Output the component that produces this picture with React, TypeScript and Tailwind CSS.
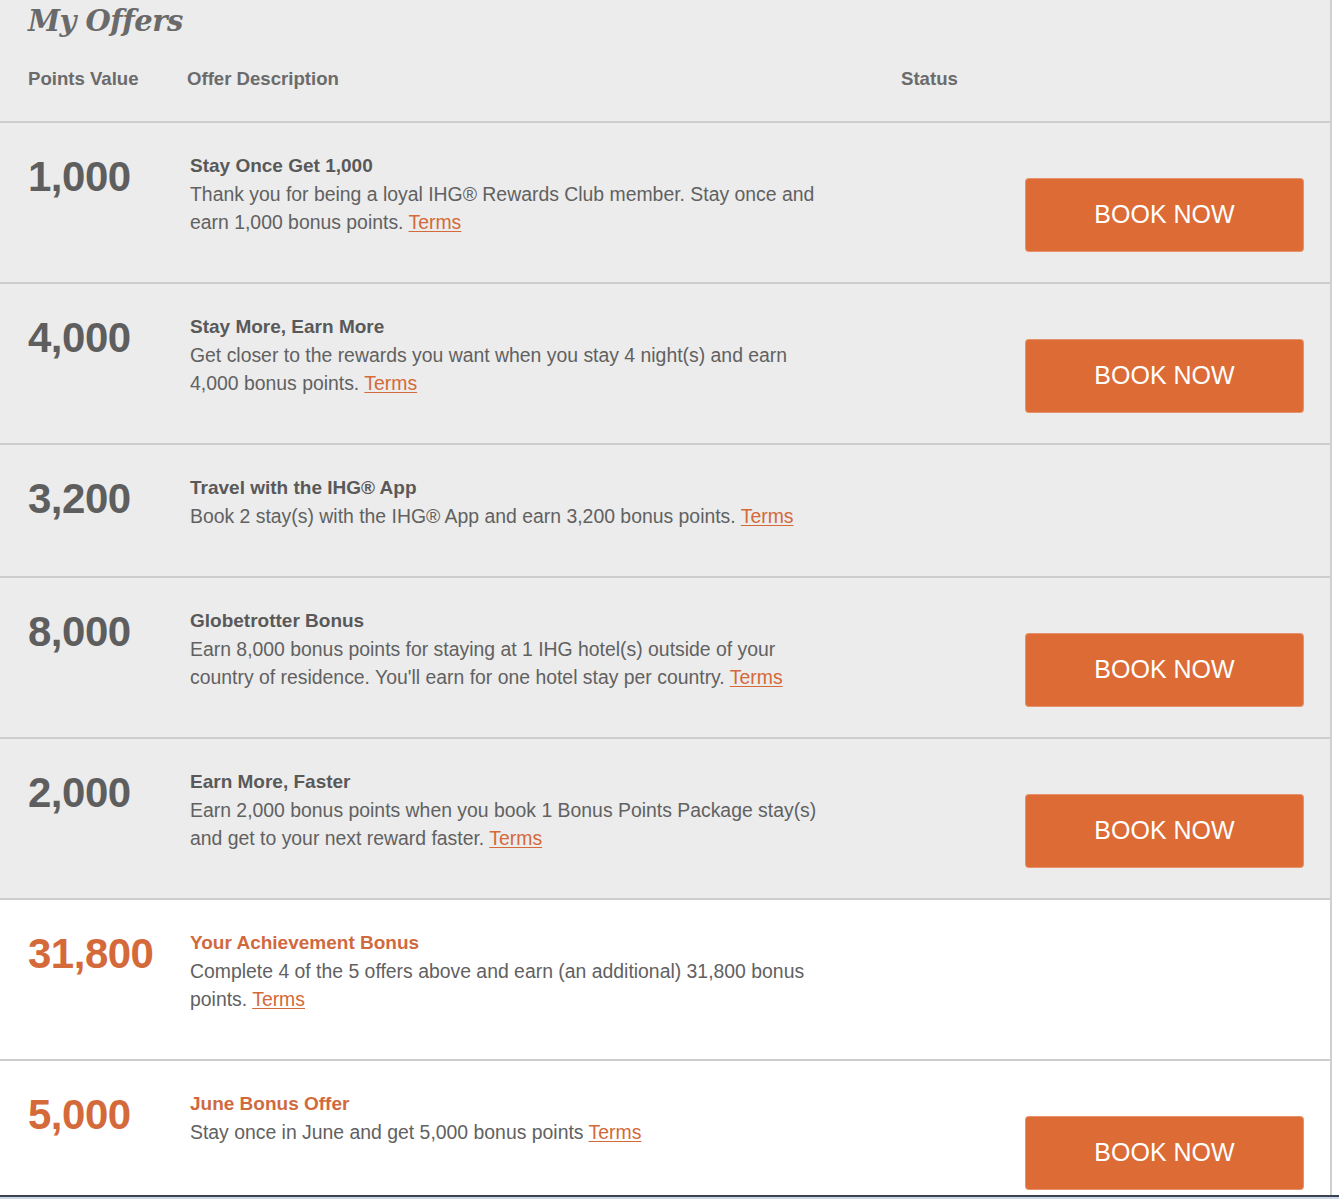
type Offer = {
  points: string
  title: string
  lines: string[]
  bookable: boolean
  highlight?: boolean
}

const offers: Offer[] = [
  {
    points: '1,000',
    title: 'Stay Once Get 1,000',
    lines: [
      'Thank you for being a loyal IHG® Rewards Club member. Stay once and',
      'earn 1,000 bonus points.',
    ],
    bookable: true,
  },
  {
    points: '4,000',
    title: 'Stay More, Earn More',
    lines: [
      'Get closer to the rewards you want when you stay 4 night(s) and earn',
      '4,000 bonus points.',
    ],
    bookable: true,
  },
  {
    points: '3,200',
    title: 'Travel with the IHG® App',
    lines: ['Book 2 stay(s) with the IHG® App and earn 3,200 bonus points.'],
    bookable: false,
  },
  {
    points: '8,000',
    title: 'Globetrotter Bonus',
    lines: [
      'Earn 8,000 bonus points for staying at 1 IHG hotel(s) outside of your',
      "country of residence. You'll earn for one hotel stay per country.",
    ],
    bookable: true,
  },
  {
    points: '2,000',
    title: 'Earn More, Faster',
    lines: [
      'Earn 2,000 bonus points when you book 1 Bonus Points Package stay(s)',
      'and get to your next reward faster.',
    ],
    bookable: true,
  },
  {
    points: '31,800',
    title: 'Your Achievement Bonus',
    lines: [
      'Complete 4 of the 5 offers above and earn (an additional) 31,800 bonus',
      'points.',
    ],
    bookable: false,
    highlight: true,
  },
  {
    points: '5,000',
    title: 'June Bonus Offer',
    lines: ['Stay once in June and get 5,000 bonus points'],
    bookable: true,
    highlight: true,
  },
]

const OfferRow = ({ offer, isLast }: { offer: Offer; isLast: boolean }) => {
  const last = offer.lines.length - 1
  return (
    <div
      className={`flex items-start pt-[29px] pl-[28px] pr-[27px] ${
        isLast ? 'pb-[6px]' : 'border-b-2 border-[#cdcdcd] pb-[46px]'
      } ${offer.highlight ? 'bg-white' : 'bg-[#ececec]'}`}
    >
      <div
        className={`w-[162px] shrink-0 text-[42px] leading-[50px] font-bold tracking-[-0.5px] ${
          offer.highlight ? 'text-[#d4693a]' : 'text-[#5e5e5e]'
        }`}
      >
        {offer.points}
      </div>
      <div className="flex-1 text-[19.4px] leading-[28px] text-[#616161]">
        <div
          className={`font-bold text-[19px] ${
            offer.highlight ? 'text-[#d06a3e]' : 'text-[#595959]'
          }`}
        >
          {offer.title}
        </div>
        {offer.lines.map((line, i) => (
          <div key={`line-${i}`} className="whitespace-nowrap">
            {line}
            {i === last ? (
              <>
                {' '}
                <a href="#" className="text-[#d4693a] underline underline-offset-2">
                  Terms
                </a>
              </>
            ) : null}
          </div>
        ))}
      </div>
      {offer.bookable ? (
        <div className={`pt-[27px] ${isLast ? '' : '-mb-[15px]'}`}>
          <button
            type="button"
            className="w-[277px] h-[72px] rounded-[3px] bg-[#dd6b35] text-white text-[25px] shadow-[0_0_0_1px_#e7926a]"
          >
            BOOK NOW
          </button>
        </div>
      ) : null}
    </div>
  )
}

const App = () => {
  return (
    <div className="w-[1339px] min-h-[1200px] bg-white font-['Liberation_Sans',Arial,sans-serif]">
      <div className="w-[1332px] border-r-2 border-[#cfcfcf]">
        <div className="bg-[#ececec] border-b-2 border-[#cdcdcd] h-[123px] pl-[28px]">
          <h1 className="font-['DejaVu_Serif',Georgia,serif] italic font-bold text-[29px] leading-[40px] text-[#6a6a6a] pt-[1px] tracking-[-0.5px]">
            My Offers
          </h1>
          <div className="flex mt-[24px] text-[18.6px] leading-[28px] font-bold text-[#6b6b6b]">
            <div className="w-[159px]">Points Value</div>
            <div className="w-[714px]">Offer Description</div>
            <div>Status</div>
          </div>
        </div>
        {offers.map((offer, index) => (
          <OfferRow
            key={`offer-${index}`}
            offer={offer}
            isLast={index === offers.length - 1}
          />
        ))}
      </div>
      <div className="h-[2px] bg-[#3b4251]" />
      <div className="h-[2px] bg-[#cdd8e6]" />
    </div>
  )
}

export default App
